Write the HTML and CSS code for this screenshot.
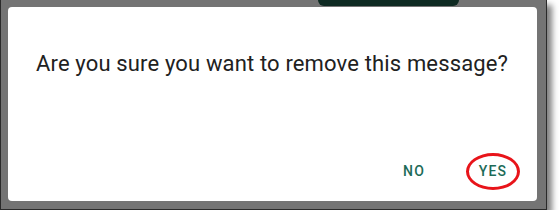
FILE: index.html
```html
<!DOCTYPE html>
<html>
<head>
<meta charset="utf-8">
<link rel="stylesheet" href="styles.css">
</head>
<body>
<div class="frame">
  <div class="topbar"></div>
  <div class="card">
    <p class="title">Are you sure you want to remove this message?</p>
    <div class="actions">
      <button class="btn">NO</button>
      <button class="btn yes">YES<span class="ring"></span></button>
    </div>
  </div>
</div>
</body>
</html>
```
FILE: styles.css
```css
html, body {
  margin: 0;
  padding: 0;
  background: #ffffff;
}
.frame {
  position: relative;
  width: 529px;
  height: 202px;
  padding: 7px 9px 0 7px;
  background: #747474;
  border-left: 1px solid #2a2a2a;
  border-right: 1px solid #2a2a2a;
  border-bottom: 1px solid #2a2a2a;
  box-shadow: 5px 5px 6px rgba(0,0,0,0.5);
}
.topbar {
  position: absolute;
  top: 0;
  left: 317px;
  width: 141px;
  height: 6px;
  background: #0e2a22;
  border-radius: 0 0 6px 6px;
}
.card {
  height: 194px;
  background: #ffffff;
  border-radius: 4px;
  display: flex;
  flex-direction: column;
  justify-content: space-between;
  box-sizing: border-box;
  padding: 0 12px 12px 28px;
}
.title {
  margin: 0;
  padding-top: 43px;
  font-family: Roboto, "Liberation Sans", sans-serif;
  font-size: 22px;
  letter-spacing: 0.15px;
  line-height: 28px;
  color: #212121;
  white-space: nowrap;
}
.actions {
  display: flex;
  justify-content: flex-end;
  gap: 15px;
}
.btn {
  position: relative;
  width: 64px;
  height: 36px;
  padding: 0;
  border: none;
  background: transparent;
  font-family: Roboto, "Liberation Sans", sans-serif;
  font-size: 14px;
  font-weight: 500;
  letter-spacing: 1.25px;
  color: #1d6b58;
}
.ring {
  position: absolute;
  left: 5px;
  top: 0px;
  width: 54px;
  height: 37px;
  box-sizing: border-box;
  border: 3px solid #e8141a;
  border-radius: 50%;
}
```
